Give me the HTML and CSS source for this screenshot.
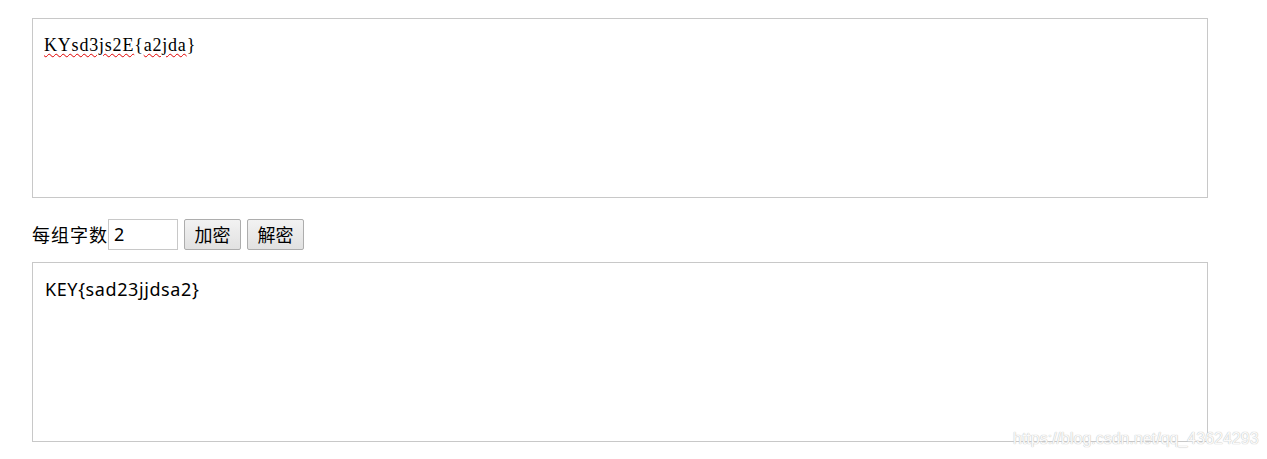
FILE: index.html
```html
<!DOCTYPE html>
<html lang="zh-CN">
<head>
<meta charset="utf-8">
<title>栅栏密码</title>
<link rel="stylesheet" href="styles.css">
</head>
<body>
<div class="page">
  <div class="box box-in"><span class="typo">KYsd3js2E</span>{<span class="typo">a2jda</span>}</div>
  <div class="controls">
    <span class="label">每组字数</span><input class="num" type="text" value="2"><button class="btn">加密</button><button class="btn">解密</button>
  </div>
  <div class="box box-out">KEY{sad23jjdsa2}</div>
</div>
<div class="watermark">https://blog.csdn.net/qq_43624293</div>
</body>
</html>
```
FILE: styles.css
```css
html, body {
  margin: 0;
  padding: 0;
  background: #fff;
}
.page {
  padding: 18px 0 0 32px;
  width: 1176px;
}
.box {
  box-sizing: border-box;
  width: 1176px;
  height: 180px;
  border: 1px solid #c8c8c8;
  background: #fff;
  color: #000;
}
.box-in {
  font-family: "Liberation Serif", "DejaVu Serif", serif;
  font-size: 18px;
  letter-spacing: 0.8px;
  padding: 15px 11px;
  line-height: 22px;
}
.typo {
  text-decoration: underline wavy #e00000;
  text-decoration-thickness: 1.2px;
  text-underline-offset: 2px;
}
.controls {
  display: flex;
  align-items: center;
  height: 32px;
  margin: 20px 0 12px;
  font-family: "Noto Sans CJK SC", "Noto Sans", sans-serif;
  font-size: 18px;
}
.label {
  line-height: 30px;
  letter-spacing: 1px;
}
.num {
  box-sizing: border-box;
  width: 70px;
  height: 31px;
  border: 1px solid #c8c8c8;
  padding: 0 5px;
  margin: 0 6px 0 0;
  font-family: "Noto Sans", "Liberation Sans", sans-serif;
  font-size: 18px;
  color: #000;
  outline: none;
}
.btn {
  box-sizing: border-box;
  width: 57px;
  height: 31px;
  margin: 0 6px 0 0;
  padding: 0;
  border: 1px solid #adadad;
  border-radius: 2px;
  background: linear-gradient(#f2f2f2, #e1e1e1);
  font-family: "Noto Sans CJK SC", sans-serif;
  font-size: 18px;
  color: #000;
  line-height: 28px;
}
.box-out {
  font-family: "Noto Sans", "Noto Sans CJK SC", sans-serif;
  font-size: 18px;
  letter-spacing: 0.6px;
  padding: 13px 12px;
  line-height: 26px;
}
.watermark {
  position: absolute;
  left: 1013px;
  top: 430px;
  font-family: "Liberation Sans", Arial, sans-serif;
  font-size: 16px;
  color: #fafafa;
  text-shadow: 0 0 1px #bdbdbd, 0 0 1px #cfcfcf;
}
```
